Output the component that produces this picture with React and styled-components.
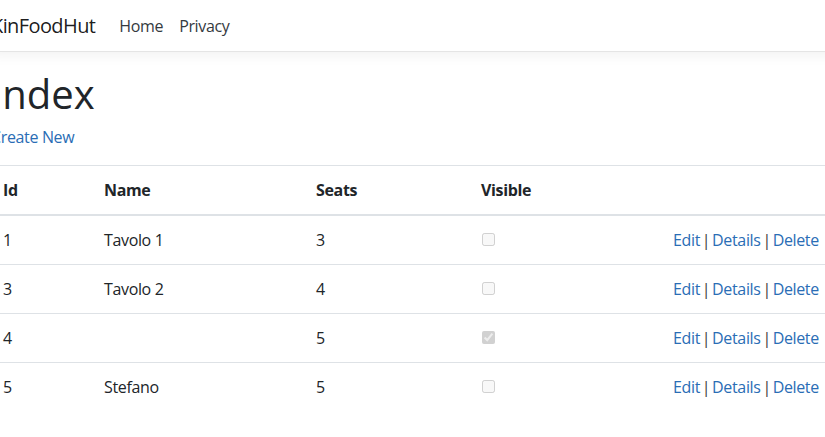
import React from "react";
import styled, { createGlobalStyle } from "styled-components";

const GlobalStyle = createGlobalStyle`
  html, body {
    margin: 0;
    padding: 0;
    background: #fff;
    overflow: hidden;
  }
  body {
    font-family: "Open Sans", "Noto Sans", Arial, sans-serif;
    font-size: 16px;
    line-height: 1.5;
    color: #212529;
    letter-spacing: -0.35px;
  }
`;

const Page = styled.div`
  width: 860px;
  margin-left: -9px;
`;

const Navbar = styled.header`
  box-sizing: border-box;
  height: 52px;
  border-bottom: 1px solid #e5e5e5;
  box-shadow: 0 4px 12px rgba(0, 0, 0, 0.05);
  display: flex;
  align-items: center;
  margin-bottom: 18px;
`;

const Brand = styled.a`
  font-size: 20px;
  color: rgba(0, 0, 0, 0.9);
  text-decoration: none;
  margin-right: 16px;
  white-space: nowrap;
  letter-spacing: -0.6px;
`;

const NavList = styled.nav`
  display: flex;
`;

const NavLink = styled.a`
  color: #343a40;
  text-decoration: none;
  padding: 8px 8px;
`;

const Title = styled.h1`
  font-size: 40px;
  font-weight: 500;
  line-height: 1.2;
  margin: 0 0 7px 0;
  letter-spacing: 0;
`;

const Para = styled.p`
  margin: 0 0 16px 0;
`;

const Link = styled.a`
  color: #2a6db5;
  text-decoration: none;
`;

const Table = styled.table`
  width: 100%;
  table-layout: fixed;
  border-collapse: collapse;
  color: #212529;
`;

const Th = styled.th`
  text-align: left;
  font-weight: 700;
  padding: 12px;
  border-top: 1px solid #dee2e6;
  border-bottom: 2px solid #dee2e6;
  width: ${(p) => p.$w || "auto"};
`;

const Td = styled.td`
  padding: 12px;
  border-top: 1px solid #dee2e6;
  vertical-align: top;
  white-space: nowrap;
`;

const ActionCell = styled(Td)`
  word-spacing: -2px;
`;

const Check = styled.input`
  margin: 0;
  width: 13px;
  height: 13px;
  vertical-align: middle;
  position: relative;
  top: -2px;
  left: 1px;
`;

const Sep = styled.span`
  color: #3a3a3a;
`;

const rows = [
  { id: 1, name: "Tavolo 1", seats: 3, visible: false },
  { id: 3, name: "Tavolo 2", seats: 4, visible: false },
  { id: 4, name: "", seats: 5, visible: true },
  { id: 5, name: "Stefano", seats: 5, visible: false },
];

export default function App() {
  return (
    <Page>
      <GlobalStyle />
      <Navbar>
        <Brand href="#">KinFoodHut</Brand>
        <NavList>
          <NavLink href="#">Home</NavLink>
          <NavLink href="#">Privacy</NavLink>
        </NavList>
      </Navbar>
      <main>
        <Title>Index</Title>
        <Para>
          <Link href="#">Create New</Link>
        </Para>
        <Table>
          <thead>
            <tr>
              <Th $w="77px">Id</Th>
              <Th $w="188px">Name</Th>
              <Th $w="141px">Seats</Th>
              <Th $w="168px">Visible</Th>
              <Th></Th>
            </tr>
          </thead>
          <tbody>
            {rows.map((r) => (
              <tr key={r.id}>
                <Td>{r.id}</Td>
                <Td>{r.name}</Td>
                <Td>{r.seats}</Td>
                <Td>
                  <Check type="checkbox" disabled defaultChecked={r.visible} />
                </Td>
                <ActionCell>
                  <Link href="#">Edit</Link> <Sep>|</Sep>{" "}
                  <Link href="#">Details</Link> <Sep>|</Sep>{" "}
                  <Link href="#">Delete</Link>
                </ActionCell>
              </tr>
            ))}
          </tbody>
        </Table>
      </main>
    </Page>
  );
}
